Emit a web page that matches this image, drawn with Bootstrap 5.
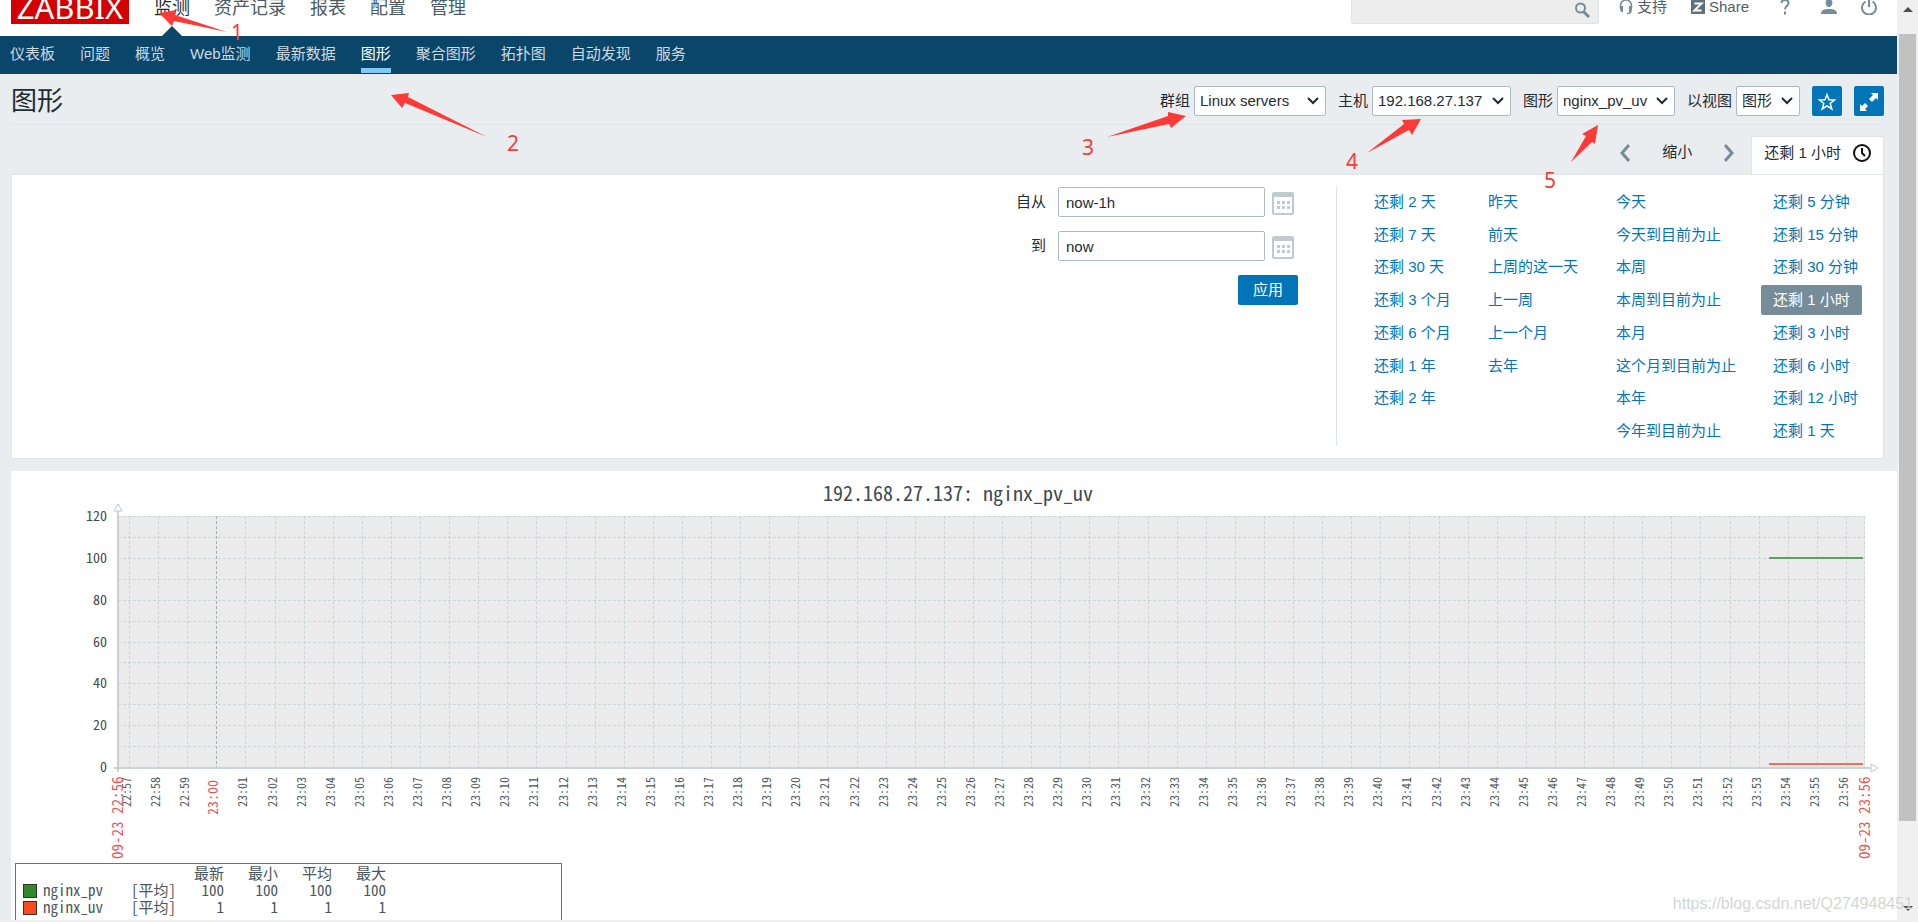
<!DOCTYPE html>
<html lang="zh-CN">
<head>
<meta charset="utf-8">
<meta name="viewport" content="width=device-width, initial-scale=1">
<title>图形</title>
<link href="https://cdn.jsdelivr.net/npm/bootstrap@5.3.0/dist/css/bootstrap.min.css" rel="stylesheet">
<style>
  body { font-family: "Liberation Sans", "Noto Sans CJK SC", sans-serif; font-size: 15px; line-height: 20px; color: #1f2c33; background: #eaedf0; }
  a { text-decoration: none; color: #0275b8; }
  .app-scroll { height: 100vh; overflow: hidden; }
  .page-body { min-width: 0; }
  .top-bar { height: 36px; padding: 0 20px 12px 11px; overflow: hidden; }
  .brand { width: 118px; height: 36px; background: #d40000; color: #fff; font: 31px/36px "Noto Sans", "Open Sans", sans-serif; padding-top: 1px; }
  .main-menu { gap: 24px; margin-left: 25px; font-size: 18px; line-height: 28px; padding-bottom: 2px; }
  .main-menu a { color: #4c5a63; }
  .main-menu a.active { color: #1f2c33; }
  .search-box { width: 248px; height: 34px; background: #ededed; border: 1px solid #dfe4e7; border-radius: 2px; }
  .search-box input { background: transparent; border: 0; min-width: 0; }
  .search-box button, .cal-btn, .icon-btn { background: none; border: 0; padding: 0; }
  .search-box button { padding: 4px 8px 0 0; }
  .tools a { color: #51606a; }
  .tools svg, .search-box svg { color: #768d99; }
  .tools { line-height: 30px; padding-bottom: 2px; }
  .sub-bar { background: #0a466a; padding: 0 10px; gap: 25px; height: 38px; }
  .sub-bar a { color: #ced9e0; line-height: 36px; border-bottom: 5px solid transparent; height: 37px; }
  .sub-bar a.active { color: #fff; border-color: #80c8f7; }
  .menu-pointer { position: absolute; left: 162px; top: 26px; width: 20px; height: 10px; background: #0a466a; clip-path: polygon(50% 0, 100% 100%, 0 100%); }
  .content-area { padding: 0 13px 0 11px; }
  .title-row { padding: 12px 0 8px; border-bottom: 1px solid #dfe4e7; }
  .title-row h1 { font-size: 26px; line-height: 30px; margin: 0; }
  .filters { gap: 12px; }
  .form-select { height: 30px; padding: 0 0 0 5px; font-size: 15px; line-height: 20px; color: #1f2c33; border: 1px solid #acbbc2; border-radius: 2px; background-color: #fff; background-position: right 6px center; background-size: 12px 8px;
    background-image: url("data:image/svg+xml,%3Csvg xmlns='http://www.w3.org/2000/svg' viewBox='0 0 12 8'%3E%3Cpath d='M1 1l5 5 5-5' fill='none' stroke='%231f2c33' stroke-width='2'/%3E%3C/svg%3E"); }
  .w-group { width: 132px; } .w-host { width: 139px; } .w-graph { width: 118px; } .w-view { width: 64px; }
  .btn-blue { background: #0275b8; color: #fff; border: 0; border-radius: 2px; height: 30px; padding: 0; font-size: 15px; line-height: 20px; }
  .btn-blue:hover { background: #02659f; color: #fff; }
  .btn-square { width: 30px; }
  .time-row { padding-top: 11px; }
  .time-tab { height: 38px; background: #fff; border: 1px solid #dfe4e7; border-bottom: 0; padding: 0 12px 5px; gap: 12px; color: #1f2c33; border-radius: 2px 2px 0 0; }
  .zoom-nav { gap: 32px; margin-right: 17px; padding-bottom: 6px; }
  .zoom-out { background: none; border: 0; padding: 0; color: #1f2c33; }
  .filter-panel { background: #fff; border: 1px solid #dfe4e7; padding: 12px 20px 12px 0; }
  .range-form { display: grid; grid-template-columns: auto 207px 33px; grid-auto-rows: 30px; row-gap: 14px; align-items: center; margin-right: 38px; }
  .range-form label { text-align: right; padding-right: 12px; }
  .range-form .form-control { height: 30px; border: 1px solid #acbbc2; border-radius: 2px; padding: 0 7px; font-size: 15px; line-height: 20px; color: #1f2c33; }
  .cal-btn { padding: 3px 4px 0 7px; line-height: 0; }
  .apply-cell { grid-column: 2 / 4; text-align: right; }
  .apply-cell .btn-blue { width: 60px; }
  .quick { display: grid; grid-auto-flow: column; grid-template-rows: repeat(8, 30px); grid-template-columns: 114px 128px 157px 102px; align-content: space-between; height: 259px; padding-left: 25px; border-left: 1px solid #dfe4e7; box-sizing: border-box; }
  .quick a { justify-self: start; padding: 0 12px; line-height: 30px; border-radius: 2px; white-space: nowrap; }
  .quick a.active { background: #768d99; color: #fff; }
  .gap-cell { grid-row-end: span 1; }
  .graph-panel { background: #fff; margin: 12px -13px 0 0; height: 600px; }
  .graph-panel svg { display: block; width: 100%; height: auto; }
  .chart-font { font-family: "Noto Sans Mono CJK SC", "Liberation Mono", monospace; }
  .legend-box { width: 547px; border: 1px solid #f03a3a; height: 180px; margin-left: 4px; padding-left: 7px; }
  .legend-box table { table-layout: fixed; width: 362px; font-size: 15px; color: #4a565c; border-collapse: collapse; }
  .legend-box td, .legend-box th { padding: 0; font-weight: 400; text-align: right; line-height: 17px; white-space: nowrap; }
  .legend-box td.agg, .legend-box td.series { text-align: left; }
  .c-series { width: 108px; } .c-agg { width: 47px; } .c-last { width: 46px; } .c-num { width: 54px; }
  .swatch { display: inline-block; width: 14px; height: 14px; border: 1px solid #333; margin-right: 6px; vertical-align: -2px; }
  .scroll-track { width: 21px; background: #f0f0f0; padding: 0 2px; }
  .scroll-track .cap { height: 34px; padding-top: 7px; }
  .scroll-thumb { background: #c1c1c1; height: 85.4%; }
  .bottom-strip { position: absolute; left: 0; right: 0; bottom: 0; height: 2px; background: #f0f0f0; }
  .watermark { position: absolute; right: 5px; bottom: 8px; font-size: 16px; color: #d5d5d5; }
  .notes { position: absolute; left: 0; top: 0; pointer-events: none; }
</style>
</head>
<body>
<div class="app-scroll d-flex position-relative">
  <div class="page-body flex-grow-1">
    <header class="top-bar bg-white d-flex align-items-end">
      <a class="brand text-center d-block flex-shrink-0" href="#">ZABBIX</a>
      <nav class="main-menu d-flex">
        <a class="active" href="#">监测</a><a href="#">资产记录</a><a href="#">报表</a><a href="#">配置</a><a href="#">管理</a>
      </nav>
      <form class="search-box d-flex ms-auto">
        <input class="flex-grow-1" type="text" aria-label="搜索">
        <button type="button" aria-label="搜索"><svg width="16" height="16" viewBox="0 0 16 16" fill="none" stroke="currentColor"><circle cx="6.500" cy="6" r="4.500" stroke-width="2"/><path d="M9.500 9.500L15 15" stroke-width="3"/></svg></button>
      </form>
      <div class="tools d-flex">
        <a href="#" class="d-flex align-items-center ms-3"><svg class="ms-1 me-1" width="14" height="16" viewBox="0 0 14 16"><path d="M1.500 9V6.500a5.500 5.500 0 0 1 11 0V9" fill="none" stroke="currentColor" stroke-width="1.500"/><path d="M1 7h3v6H2.500L1 11zM10 7h3v4l-1.500 2H10z" fill="currentColor"/><path d="M12 12c0 2-2 2.500-4 2.500" fill="none" stroke="currentColor" stroke-width="1.500"/></svg>支持</a>
        <a href="#" class="d-flex align-items-center ms-4"><svg class="me-1" width="14" height="16" viewBox="0 0 14 16"><path d="M0 1h14v14H0z" fill="#5e7280"/><path d="M3.500 4.500h7l-7 7h7" fill="none" stroke="#fff" stroke-width="2"/></svg>Share</a>
        <a href="#" aria-label="帮助" class="d-flex align-items-center ms-4 ps-1"><svg width="16" height="18" viewBox="0 0 16 18" fill="none" stroke="currentColor" stroke-width="2"><path d="M4.500 5C4.500 1 11.500 1 11.500 5c0 3-3.500 3-3.500 6.500"/><path d="M8 13.500v3"/></svg></a>
        <a href="#" aria-label="用户" class="d-flex align-items-center ms-4"><svg class="ms-1" width="16" height="16" viewBox="0 0 16 16" fill="currentColor"><path d="M8 0c5 0 4 8 0 8S3 0 8 0zM0 15c0-4 3-5 8-5s8 1 8 5z"/></svg></a>
        <a href="#" aria-label="退出" class="d-flex align-items-center ms-4"><svg width="16" height="16" viewBox="0 0 16 16" fill="none" stroke="currentColor" stroke-width="2"><path d="M4.500 2.500a7 7 0 1 0 7 0M8 0v8"/></svg></a>
      </div>
    </header>
    <span class="menu-pointer"></span>
    <nav class="sub-bar d-flex">
      <a href="#">仪表板</a><a href="#">问题</a><a href="#">概览</a><a href="#">Web监测</a><a href="#">最新数据</a><a class="active" href="#">图形</a><a href="#">聚合图形</a><a href="#">拓扑图</a><a href="#">自动发现</a><a href="#">服务</a>
    </nav>
    <main class="content-area">
      <div class="title-row d-flex align-items-center">
        <h1 class="fw-normal">图形</h1>
        <form class="filters d-flex align-items-center ms-auto text-nowrap">
          <div class="d-flex align-items-center gap-1"><label for="f1">群组</label><select id="f1" class="form-select w-group"><option>Linux servers</option></select></div>
          <div class="d-flex align-items-center gap-1"><label for="f2">主机</label><select id="f2" class="form-select w-host"><option>192.168.27.137</option></select></div>
          <div class="d-flex align-items-center gap-1"><label for="f3">图形</label><select id="f3" class="form-select w-graph"><option>nginx_pv_uv</option></select></div>
          <div class="d-flex align-items-center gap-1"><label for="f4">以视图</label><select id="f4" class="form-select w-view"><option>图形</option></select></div>
          <button type="button" class="btn btn-blue btn-square" aria-label="收藏"><svg width="18" height="18" viewBox="0 0 18 18" fill="none" stroke="#fff" stroke-width="1.500"><path d="M9 1.500l2 5.300 5.600.2-4.400 3.500 1.600 5.500L9 12.900 4.200 16l1.600-5.500L1.400 7l5.600-.2z"/></svg></button>
          <button type="button" class="btn btn-blue btn-square" aria-label="全屏"><svg width="20" height="20" viewBox="0 0 20 20" fill="#fff"><path d="M12 1h7v7l-2-2-4 4-3-3 4-4zM1 12l2 2 3-3 3 3-3 3 2 2H1z"/></svg></button>
        </form>
      </div>
      <div class="time-row d-flex justify-content-end">
        <div class="zoom-nav d-flex align-items-center">
          <button type="button" class="icon-btn" aria-label="后退"><svg width="10" height="18" viewBox="0 0 10 18" fill="none" stroke="#768d99" stroke-width="3"><path d="M9 1L2 9l7 8"/></svg></button>
          <button type="button" class="zoom-out">缩小</button>
          <button type="button" class="icon-btn" aria-label="前进"><svg width="10" height="18" viewBox="0 0 10 18" fill="none" stroke="#768d99" stroke-width="3"><path d="M1 1l7 8-7 8"/></svg></button>
        </div>
        <a href="#" class="time-tab d-flex align-items-center">还剩 1 小时<svg width="18" height="18" viewBox="0 0 18 18" fill="none" stroke="#111" stroke-width="2"><circle cx="9" cy="9" r="8"/><path d="M9 4v5l3 3"/></svg></a>
      </div>
      <section class="filter-panel d-flex justify-content-end align-items-start">
        <form class="range-form">
          <label for="from">自从</label><input id="from" class="form-control" type="text" value="now-1h">
          <button type="button" class="cal-btn" aria-label="选择开始日期"><svg width="22" height="23" viewBox="0 0 22 23"><use href="#cal"/></svg></button>
          <label for="to">到</label><input id="to" class="form-control" type="text" value="now">
          <button type="button" class="cal-btn" aria-label="选择结束日期"><svg width="22" height="23" viewBox="0 0 22 23"><g id="cal"><rect x="1" y="1" width="20" height="21" rx="1" fill="#fff" stroke="#c0cbd0" stroke-width="2"/><path d="M1 1h20v4H1z" fill="#c0cbd0"/><path d="M5 9h3v3H5zM10 9h3v3h-3zM15 9h3v3h-3zM5 14h3v3H5zM10 14h3v3h-3zM15 14h3v3h-3z" fill="#c0cbd0"/></g></svg></button>
          <div class="apply-cell"><button type="button" class="btn btn-blue">应用</button></div>
        </form>
        <nav class="quick">
          <a href="#">还剩 2 天</a><a href="#">还剩 7 天</a><a href="#">还剩 30 天</a><a href="#">还剩 3 个月</a><a href="#">还剩 6 个月</a><a href="#">还剩 1 年</a><a href="#">还剩 2 年</a><span class="gap-cell"></span>
          <a href="#">昨天</a><a href="#">前天</a><a href="#">上周的这一天</a><a href="#">上一周</a><a href="#">上一个月</a><a href="#">去年</a><span class="gap-cell"></span><span class="gap-cell"></span>
          <a href="#">今天</a><a href="#">今天到目前为止</a><a href="#">本周</a><a href="#">本周到目前为止</a><a href="#">本月</a><a href="#">这个月到目前为止</a><a href="#">本年</a><a href="#">今年到目前为止</a>
          <a href="#">还剩 5 分钟</a><a href="#">还剩 15 分钟</a><a href="#">还剩 30 分钟</a><a class="active" href="#">还剩 1 小时</a><a href="#">还剩 3 小时</a><a href="#">还剩 6 小时</a><a href="#">还剩 12 小时</a><a href="#">还剩 1 天</a>
        </nav>
      </section>
      <section class="graph-panel chart-font">
        <svg id="chart" viewBox="0 0 1886 392" role="img" aria-label="nginx_pv_uv"></svg>
        <div class="legend-box">
          <table>
            <colgroup><col class="c-series"><col class="c-agg"><col class="c-last"><col class="c-num"><col class="c-num"><col class="c-num"></colgroup>
            <thead><tr><th></th><th></th><th>最新</th><th>最小</th><th>平均</th><th>最大</th></tr></thead>
            <tbody>
              <tr><td class="series"><span class="swatch" style="background:#32872b"></span>nginx_pv</td><td class="agg">[平均]</td><td>100</td><td>100</td><td>100</td><td>100</td></tr>
              <tr><td class="series"><span class="swatch" style="background:#fb4a1e"></span>nginx_uv</td><td class="agg">[平均]</td><td>1</td><td>1</td><td>1</td><td>1</td></tr>
            </tbody>
          </table>
        </div>
      </section>
    </main>
  </div>
  <div class="scroll-track d-flex flex-column flex-shrink-0 text-center lh-1">
    <div class="cap flex-shrink-0"><svg class="d-block mx-auto" width="10" height="5" viewBox="0 0 10 5"><path d="M5 0l5 5H0z" fill="#505050"/></svg></div>
    <div class="scroll-thumb flex-shrink-0"></div>
    <svg class="d-block mx-auto mt-auto mb-2 flex-shrink-0" width="10" height="8" viewBox="0 0 10 8"><path d="M0 0h10L5 5z" fill="#505050"/></svg>
  </div>
  <div class="bottom-strip"></div>
  <div class="watermark">https://blog.csdn.net/Q274948451</div>
  <svg class="notes" width="1640" height="200" viewBox="0 0 1640 200" fill="#fc3a37" font-family="Noto Sans, Open Sans, sans-serif" font-size="21">
    <path d="M159 13L176 10 175 15 227 32 174 21 172 26zM391 95L409 93 408 97 487 137 405 103 402 108zM1186 116L1168 112 1168 116 1107 137 1169 124 1171 128zM1421 119L1402 120 1404 124 1367 153 1409 130 1412 135zM1598 125L1582 134 1586 136 1571 162 1592 142 1595 144z"/>
    <text x="231" y="40">1</text><text x="507" y="151">2</text><text x="1082" y="155">3</text><text x="1346" y="169">4</text><text x="1544" y="188">5</text>
  </svg>
</div>
<script>
  // Axis geometry of the chart, in viewBox units
  const L = 107, R = 1854, T = 45, B = 296, first = 118, step = 29.1;
  let s = `<rect x="${L}" y="${T}" width="${R - L}" height="${B - T}" fill="#ebebeb"/>`;
  const dash = 'stroke-dasharray="3 2"';
  for (let i = 0; i < 12; i++) {
    const y = Math.round(T + i * (B - T) / 12) + .5;
    s += `<path d="M${L} ${y}H${R}" stroke="#ccd6da" ${dash}/>`;
  }
  for (let v = 0; v <= 120; v += 20) {
    const y = Math.round(B - v * (B - T) / 120);
    s += `<text x="96" y="${y + 5}" text-anchor="end" font-size="14" font-weight="500" fill="#3f4a50">${v}</text>`;
  }
  for (let i = 0; i < 60; i++) {
    const x = Math.round(first + i * step), m = 57 + i, hour = m === 60;
    const t = (m < 60 ? '22:' : '23:') + String(m % 60).padStart(2, '0');
    s += `<path d="M${x + .5} ${T}V${B}" stroke="${hour ? '#a9b0b4' : '#ccd6da'}" ${dash}/>`;
    s += `<text transform="translate(${x + 2} ${hour ? 344 : 336}) rotate(-90)" font-size="${hour ? 14 : 12}" fill="${hour ? '#e85555' : '#4a565c'}">${t}</text>`;
  }
  s += `<path d="M${R - .5} ${T}V${B}" stroke="#ccd6da" ${dash}/>`;
  s += `<path d="M${L} 40V301M103 ${B + 1}H1860" fill="none" stroke="#b9c7cd" stroke-width="1.500"/>`;
  s += `<path d="M103 40l4-7 4 7zM1860 ${B - 3}l7 4-7 4z" fill="#fff" stroke="#b9c7cd"/>`;
  s += `<path d="M1758 87H1852" stroke="#5ba356" stroke-width="2"/><path d="M1758 293H1852" stroke="#f0705a" stroke-width="2"/>`;
  for (const [x, t] of [[L, '09-23 22:56'], [R, '09-23 23:56']])
    s += `<text transform="translate(${x + 5} 388) rotate(-90)" font-size="15" fill="#e85555">${t}</text>`;
  s += `<text x="947" y="30" text-anchor="middle" font-size="20" fill="#3f4a50">192.168.27.137: nginx_pv_uv</text>`;
  document.getElementById('chart').innerHTML = s;
</script>
<script src="https://cdn.jsdelivr.net/npm/bootstrap@5.3.0/dist/js/bootstrap.bundle.min.js"></script>
</body>
</html>
